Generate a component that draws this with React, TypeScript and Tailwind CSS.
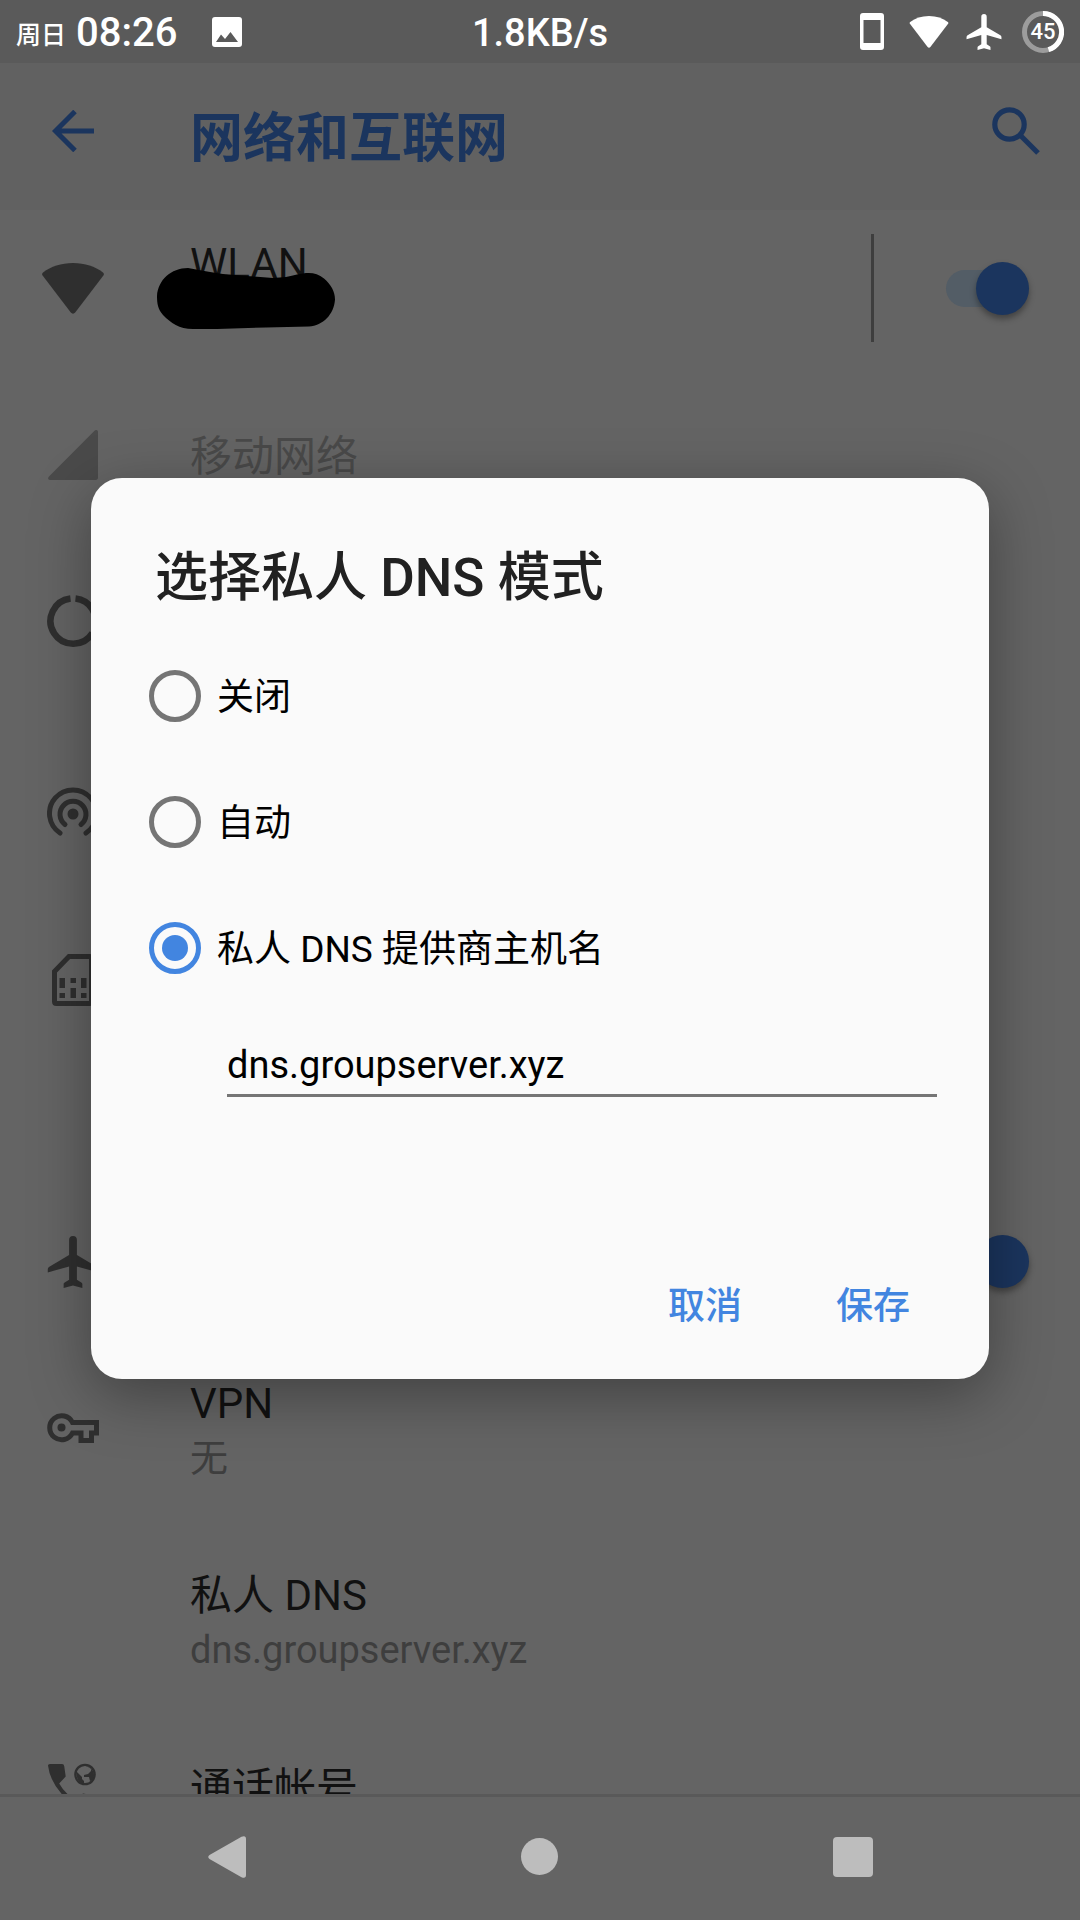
import { useState, type ReactNode } from "react";

function PlaneIcon({ className }: { className: string }) {
  return (
    <svg viewBox="1.5 2 20 20" className={className} fill="currentColor" aria-hidden="true">
      <path d="M21.2 16v-1.1c0-.5-.2-.8-.6-1.1L13 9.300V3.5a1.500 1.500 0 0 0-3 0v5.800l-7.600 4.500c-.4.3-.6.6-.6 1.100V16l8.200-2.300v5.100l-1.700 1.100c-.3.200-.4.400-.4.700V22l3.600-1 3.600 1v-1.400c0-.3-.1-.5-.4-.7L13 18.800v-5.100z" />
    </svg>
  );
}

function WifiIcon({ className }: { className: string }) {
  return (
    <svg viewBox="0 0 62 51" className={className} fill="currentColor" aria-hidden="true">
      <path d="M31 0C19 0 9 3.500 1 9.500c-1 .8-1.200 1.900-.4 3L28.800 49.600c1.200 1.500 3.200 1.500 4.400 0L61.400 12.500c.8-1.100.6-2.200-.4-3C53 3.500 43 0 31 0z" />
    </svg>
  );
}

function SignalIcon() {
  return (
    <svg viewBox="0 0 50 50" className="size-[50px] text-[#4a4a4a]" fill="currentColor" aria-hidden="true">
      <path d="M46.500.7 1 46.400C-.6 48 .2 50 2 50h45.500c1.700 0 2.500-.9 2.500-2.500V2c0-1.900-2-2.700-3.500-1.300z" />
    </svg>
  );
}

function DataIcon() {
  return (
    <svg viewBox="0 0 52 52" className="size-[52px]" fill="none" stroke="currentColor" strokeWidth="6.500" aria-hidden="true">
      <path d="M23.500 3.500A22.700 22.700 0 1 0 45.500 38" />
      <path d="M28.500 3.500A22.700 22.700 0 0 1 47.500 33.500" />
    </svg>
  );
}

function HotspotIcon() {
  return (
    <svg viewBox="0 0 52 52" className="size-[52px]" fill="none" stroke="currentColor" strokeWidth="5" strokeLinecap="round" aria-hidden="true">
      <path d="M13 46a23.500 23.500 0 1 1 26 0" />
      <path d="M18 37.500a13 13 0 1 1 16 0" />
      <circle cx="26" cy="27" r="5.500" fill="currentColor" stroke="none" />
    </svg>
  );
}

function SimIcon() {
  return (
    <svg viewBox="0 0 42 52" className="h-[52px] w-[42px]" fill="currentColor" aria-hidden="true">
      <path
        d="M2.500 17.500 17 2.500h20.500q2 0 2 2v43q0 2-2 2h-33q-2 0-2-2z"
        fill="none"
        stroke="currentColor"
        strokeWidth="5"
      />
      <path d="M7.500 24H13v10H7.500zM18.500 24H24v5h-5.500zM29 24h5.500v10H29zM7.500 39H13v5H7.500zM18.500 34H24v10h-5.500zM29 39h5.500v5H29z" />
    </svg>
  );
}

function KeyIcon() {
  return (
    <svg viewBox="0 0 52 30" className="h-[30px] w-[52px]" fill="none" stroke="currentColor" strokeWidth="5" aria-hidden="true">
      <path d="M49.500 9.500H25.500A12 12 0 1 0 25.500 20H34v7.500h10.500V20h5z" />
      <circle cx="14.500" cy="14.500" r="4" fill="currentColor" stroke="none" />
    </svg>
  );
}

function CallIcon() {
  return (
    <svg viewBox="0 0 50 50" className="size-[50px]" fill="currentColor" aria-hidden="true">
      <path d="M2 2h12q2 0 2.200 2l1.500 10.500-6.500 7Q17 32 28 38l7-6.500L48 34v14q-18 1-32-13.500T0 3.500Q0 2 2 2z" />
      <circle cx="37" cy="12.500" r="9.700" fill="none" stroke="currentColor" strokeWidth="2.200" />
      <path d="m28 9 6 6v2l2 2v3q-8-2-8-13zM36 3l7 3v3l-3 3-4 1v2h5l1 4 3-1q3-8-3-12z" />
    </svg>
  );
}

function Scribble() {
  return (
    <svg viewBox="0 0 178 62" className="absolute top-9 left-[-33px] h-[62px] w-[178px]" aria-hidden="true">
      <path d="M0 28C1 12 14 0 31 0c11 2 21 4 35 6l50 4q14-.5 24-3.500c10-2 19-3 27 4 7 6 11 13 11 21-1 15-12 26-26 27l-43 1-49 1.500H36C22 61 14 55 6 47 1 41 0 36 0 28z" />
    </svg>
  );
}

function Toggle({ label }: { label: string }) {
  return (
    <input
      type="checkbox"
      role="switch"
      defaultChecked
      aria-label={label}
      className="relative mr-[51px] h-[37px] w-[83px] shrink-0 appearance-none rounded-full bg-[#535d66] after:absolute after:-top-2 after:left-0 after:size-[53px] after:rounded-full after:bg-[#777] after:shadow-[0_4px_6px_rgba(0,0,0,0.35)] checked:after:left-[30px] checked:after:bg-[#1b355e]"
    />
  );
}

type RowProps = {
  icon?: ReactNode;
  title?: string;
  summary?: string;
  disabled?: boolean;
  className?: string;
  cover?: ReactNode;
  children?: ReactNode;
};

function Row({ icon, title, summary, disabled, cover, children, className = "h-[141px]" }: RowProps) {
  return (
    <li className={`flex shrink-0 items-center ${className}`}>
      <span className="flex w-[146px] shrink-0 justify-center text-[#2f2f2f]">{icon}</span>
      <div className="relative ml-11 flex-1 pt-1">
        {title && (
          <p className={`text-[42px] leading-[56px] ${disabled ? "text-[#494949]" : "text-[#111]"}`}>{title}</p>
        )}
        {summary !== undefined && <p className="h-[52px] text-[38px] leading-[52px] text-[#3e3e3e]">{summary}</p>}
        {cover}
      </div>
      {children}
    </li>
  );
}

const modes = ["关闭", "自动", "私人 DNS 提供商主机名"];

export default function App() {
  const [mode, setMode] = useState(2);
  return (
    <div className="flex h-screen flex-col overflow-hidden bg-[#646464] font-[Roboto,'Noto_Sans_CJK_SC',sans-serif]">
      <div className="grid h-[63px] shrink-0 grid-cols-[1fr_auto_1fr] items-center bg-[#5a5a5a] text-white">
        <div className="flex items-center pl-4">
          <span className="mt-2 text-[25px] leading-8 font-medium">周日</span>
          <span className="ml-2.5 pt-0.5 text-[40px] leading-[60px] font-medium">08:26</span>
          <svg viewBox="0 0 30 30" className="ml-[34px] size-[30px]" fill="currentColor" aria-label="图片">
            <path fillRule="evenodd" d="M3 0h24q3 0 3 3v24q0 3-3 3H3q-3 0-3-3V3q0-3 3-3zM4 25h22l-7.500-10-5.500 7-4-4.500z" />
          </svg>
        </div>
        <span className="pt-0.5 text-[38px] leading-[60px] font-medium">1.8KB/s</span>
        <div className="flex items-center justify-end pr-4">
          <svg viewBox="0 0 24 37" className="h-[37px] w-6" fill="currentColor" aria-hidden="true">
            <path fillRule="evenodd" d="M3 0h18q3 0 3 3v31q0 3-3 3H3q-3 0-3-3V3q0-3 3-3zM3.500 7v23h17V7z" />
          </svg>
          <WifiIcon className="ml-6 h-8 w-[42px]" />
          <PlaneIcon className="ml-4 size-9" />
          <div className="relative ml-5 flex size-[42px] items-center justify-center">
            <svg viewBox="0 0 42 42" className="absolute inset-0" fill="none" strokeWidth="5" aria-hidden="true">
              <circle cx="21" cy="21" r="18.500" stroke="#9c9c9c" />
              <path d="M21 2.500A18.500 18.500 0 0 1 26.500 38.700" stroke="#fff" />
            </svg>
            <span className="relative text-[22px] leading-6 font-medium">45</span>
          </div>
        </div>
      </div>

      <div className="relative flex min-h-0 flex-1 flex-col">
        <header className="flex h-[147px] shrink-0 items-center bg-[#616161] text-[#1b355e]">
          <button type="button" aria-label="返回" className="flex w-[146px] justify-center pb-3">
            <svg viewBox="0 0 42 42" className="size-[42px]" fill="none" stroke="currentColor" strokeWidth="5" aria-hidden="true">
              <path d="M42 21H4M23 1.500 3.500 21 23 40.500" />
            </svg>
          </button>
          <h1 className="ml-11 flex-1 pt-1 text-[53px] leading-[60px] font-bold">网络和互联网</h1>
          <button type="button" aria-label="搜索" className="mr-10 pb-3">
            <svg viewBox="0 0 48 48" className="size-12" fill="none" stroke="currentColor" strokeWidth="5.200" aria-hidden="true">
              <circle cx="17.500" cy="17.500" r="14.700" />
              <path d="m29 29 17 17" />
            </svg>
          </button>
        </header>

        <ul className="flex min-h-0 flex-1 flex-col overflow-hidden">
          <Row
            icon={<WifiIcon className="h-[51px] w-[62px]" />}
            title="WLAN"
            summary=""
            cover={<Scribble />}
            className="mb-[18px] h-[156px]"
          >
            <span className="mr-[72px] h-[108px] w-[3px] bg-[#3e3e3e]" />
            <Toggle label="WLAN" />
          </Row>
          <Row icon={<SignalIcon />} title="移动网络" disabled />
          <Row icon={<DataIcon />} className="h-[192px]" />
          <Row icon={<HotspotIcon />} className="h-[192px]" />
          <Row icon={<SimIcon />} />
          <Row />
          <Row icon={<PlaneIcon className="size-[52px]" />}>
            <Toggle label="飞行模式" />
          </Row>
          <Row icon={<KeyIcon />} title="VPN" summary="无" className="h-[192px]" />
          <Row title="私人 DNS" summary="dns.groupserver.xyz" className="h-[192px]" />
          <Row icon={<CallIcon />} title="通话帐号" />
        </ul>

        <div className="absolute inset-0 flex items-center justify-center px-[91px]">
          <form
            role="dialog"
            aria-labelledby="dialog-title"
            onSubmit={(e) => e.preventDefault()}
            className="w-full rounded-[31px] bg-[#fafafa] pt-[70px] pb-[25px] shadow-[0_16px_60px_rgba(0,0,0,0.35)]"
          >
            <h2 id="dialog-title" className="mb-[25px] ml-16 text-[53px] leading-[60px] font-medium text-[#212121]">
              选择私人 DNS 模式
            </h2>
            {modes.map((label, i) => (
              <label key={label} className="ml-[58px] flex h-[126px] items-center gap-4 text-[37px] leading-[50px] text-black">
                <input
                  type="radio"
                  name="mode"
                  checked={mode === i}
                  onChange={() => setMode(i)}
                  className="flex size-[52px] shrink-0 appearance-none items-center justify-center rounded-full border-5 border-[#757575] checked:border-[#4285e0] checked:before:size-[26px] checked:before:rounded-full checked:before:bg-[#4285e0]"
                />
                <span className="pt-1">{label}</span>
              </label>
            ))}
            <div className="mt-6 mr-[52px] ml-[136px]">
              <input
                type="text"
                aria-label="提供商主机名"
                defaultValue="dns.groupserver.xyz"
                className="h-[62px] w-full border-b-3 border-[#757575] bg-transparent text-[38px] text-black outline-none"
              />
            </div>
            <div className="mt-[157px] mr-8 flex justify-end text-[37px] font-medium text-[#4285e0]">
              <button type="button" className="h-[100px] w-[168px] pt-1.5">取消</button>
              <button type="submit" className="h-[100px] w-[168px] pt-1.5">保存</button>
            </div>
          </form>
        </div>
      </div>

      <nav className="flex h-[126px] shrink-0 items-center justify-around border-t-3 border-[#595959] px-[70px] pb-1 text-[#bdbdbd]">
        <button type="button" aria-label="返回" className="flex w-20 justify-center">
          <svg viewBox="0 0 38 42" className="h-[42px] w-[38px]" fill="currentColor" aria-hidden="true">
            <path d="M33.500.8 1.500 19q-2.500 2 0 4l32 18.200Q38 43 38 39V3q0-4-4.500-2.200z" />
          </svg>
        </button>
        <button type="button" aria-label="主屏幕" className="flex w-20 justify-center">
          <span className="size-[37px] rounded-full bg-[#bdbdbd]" />
        </button>
        <button type="button" aria-label="最近任务" className="flex w-20 justify-center">
          <span className="size-10 rounded-[4px] bg-[#bdbdbd]" />
        </button>
      </nav>
    </div>
  );
}
